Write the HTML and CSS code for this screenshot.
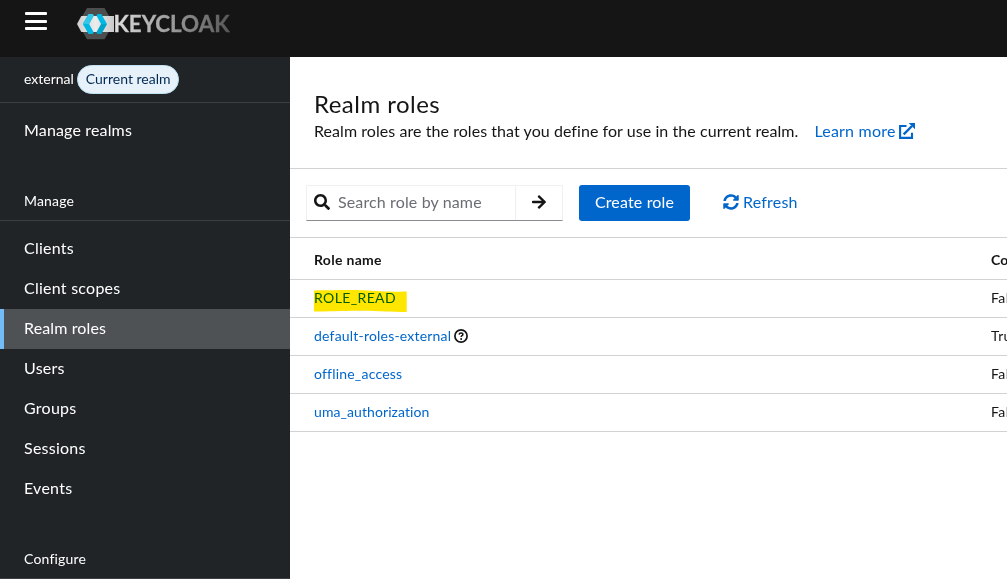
FILE: index.html
```
<!DOCTYPE html>
<html lang="en">
<head>
<meta charset="utf-8">
<title>Keycloak Administration Console</title>
<link rel="stylesheet" href="styles.css">
</head>
<body>
<div class="page">
  <header class="masthead">
    <button class="menu-toggle" aria-label="Menu"><span></span><span></span><span></span></button>
    <svg class="logo" width="156" height="34" viewBox="76 7 156 34">
      <defs>
        <linearGradient id="band" x1="0" x2="1" y1="0" y2="0"><stop offset="0" stop-color="#cfcfcf"/><stop offset=".5" stop-color="#ececec"/><stop offset="1" stop-color="#c9c9c9"/></linearGradient>
        <linearGradient id="word" gradientUnits="userSpaceOnUse" x1="114" x2="229" y1="0" y2="0"><stop offset="0" stop-color="#dedede"/><stop offset="1" stop-color="#585858"/></linearGradient>
      </defs>
      <path fill="#4d4d4d" d="M87 8h17.5l9 15.7-9 15.6H87l-9-15.6z"/>
      <path fill="url(#band)" d="M81.3 16H114v16H81.3L77 24z"/>
      <path fill="#00b8e3" d="M88.5 14h4.2l1 1.8L89.1 24l4.6 8.2-1 1.8h-4.2L82.8 24z"/>
      <path fill="#33c6e9" d="M88.5 14h4.2l1 1.8L89.1 24h-6.3z"/>
      <path fill="#00b8e3" d="M97.5 14h3.8l5.700 10-5.700 10h-3.800l-1-1.800 4.600-8.200-4.600-8.200z"/>
      <path fill="#008aaa" d="M101.100 24h5.900l-5.700 10h-3.800l-1-1.800z" opacity=".45"/>
      <text x="113.500" y="31.500" textLength="116" lengthAdjust="spacingAndGlyphs" class="wordmark">KEYCLOAK</text>
    </svg>
  </header>
  <div class="body">
    <nav class="sidebar">
      <div class="realm"><span class="realm-name">external</span><span class="pill">Current realm</span></div>
      <a class="item manage-realms">Manage realms</a>
      <h2 class="section">Manage</h2>
      <div class="items">
        <a class="item">Clients</a>
        <a class="item">Client scopes</a>
        <a class="item current">Realm roles</a>
        <a class="item">Users</a>
        <a class="item">Groups</a>
        <a class="item">Sessions</a>
        <a class="item">Events</a>
      </div>
      <h2 class="section">Configure</h2>
    </nav>
    <main class="main">
      <section class="intro">
        <h1>Realm roles</h1>
        <p><span class="desc">Realm roles are the roles that you define for use in the current realm.</span><a class="learn">Learn more<svg width="16" height="16" viewBox="0 0 16 16"><path d="M7.500 3H1.100v11.900H13V9.800" fill="none" stroke="currentColor" stroke-width="2.100"/><path d="M4.700 11.300L13 3" fill="none" stroke="currentColor" stroke-width="2.400"/><path d="M9.700 0H16v6.300z" fill="currentColor"/></svg></a></p>
      </section>
      <section class="toolbar">
        <div class="search">
          <div class="field"><svg width="16" height="16" viewBox="0 0 512 512"><path fill="currentColor" d="M505 442.700L405.300 343c-4.500-4.500-10.600-7-17-7H372c27.600-35.300 44-79.700 44-128C416 93.100 322.900 0 208 0S0 93.100 0 208s93.100 208 208 208c48.300 0 92.700-16.400 128-44v16.300c0 6.400 2.500 12.500 7 17l99.700 99.700c9.400 9.400 24.600 9.400 33.900 0l28.300-28.300c9.400-9.400 9.400-24.600.1-34zM208 336c-70.700 0-128-57.200-128-128 0-70.700 57.200-128 128-128 70.700 0 128 57.200 128 128 0 70.700-57.200 128-128 128z"/></svg><span>Search role by name</span></div>
          <button class="go" aria-label="Search"><svg width="14" height="16" viewBox="0 0 448 512"><path fill="currentColor" d="M190.500 66.900l22.200-22.200c9.400-9.400 24.600-9.400 33.900 0L441 239c9.400 9.400 9.400 24.600 0 33.900L246.600 467.300c-9.400 9.400-24.600 9.400-33.900 0l-22.200-22.200c-9.500-9.500-9.300-25 .4-34.300L311.400 296H24c-13.300 0-24-10.700-24-24v-32c0-13.300 10.700-24 24-24h287.400L190.900 101.200c-9.800-9.300-10-24.800-.4-34.300z"/></svg></button>
        </div>
        <button class="create">Create role</button>
        <a class="refresh"><svg width="16" height="16" viewBox="0 0 512 512"><path fill="currentColor" d="M370.720 133.280C339.458 104.008 298.888 87.962 255.848 88c-77.458.068-144.328 53.178-162.791 126.850-1.344 5.363-6.122 9.150-11.651 9.150H24.103c-7.498 0-13.194-6.807-11.807-14.176C33.933 94.924 134.813 8 256 8c66.448 0 126.791 26.136 171.315 68.685L463.030 40.970C478.149 25.851 504 36.559 504 57.941V192c0 13.255-10.745 24-24 24H345.941c-21.382 0-32.090-25.851-16.971-40.971l41.750-41.749zM32 296h134.059c21.382 0 32.090 25.851 16.971 40.971l-41.750 41.750c31.262 29.273 71.835 45.319 114.876 45.280 77.418-.070 144.315-53.144 162.787-126.849 1.344-5.363 6.122-9.150 11.651-9.150h57.304c7.498 0 13.194 6.807 11.807 14.176C478.067 417.076 377.187 504 256 504c-66.448 0-126.791-26.136-171.315-68.685L48.970 471.030C33.851 486.149 8 475.441 8 454.059V320c0-13.255 10.745-24 24-24z"/></svg>Refresh</a>
      </section>
      <section class="table">
        <div class="row head"><span class="role-head">Role name</span><span>Composite</span></div>
        <div class="row"><a class="marked"><span class="caps">ROLE_READ</span><svg class="marker" width="93" height="24" viewBox="0 0 93 24"><path fill="#ffe600" d="M0 1.500C20 1 38 .6 50 1.200S75 3 92.700 2.600V23C75 23 65 21.500 45 21.700S15 22.300 0 22.600z"/></svg></a><span class="value">False</span></div>
        <div class="row"><a>default-roles-external<svg class="help" width="14" height="14" viewBox="0 0 14 14"><circle cx="7" cy="7" r="6.100" fill="none" stroke="#151515" stroke-width="1.700"/><path d="M5.100 5.600c.1-1.100.8-1.700 1.900-1.700s1.900.6 1.900 1.500c0 1.300-1.800 1.300-1.800 2.600" fill="none" stroke="#151515" stroke-width="1.500"/><circle cx="7.100" cy="9.900" r="1" fill="#151515"/></svg></a><span class="value">True</span></div>
        <div class="row"><a>offline_access</a><span class="value">False</span></div>
        <div class="row"><a class="uma">uma_authorization</a><span class="value">False</span></div>
      </section>
    </main>
  </div>
</div>
</body>
</html>
```
FILE: styles.css
```
* { box-sizing: border-box; }
body { margin: 0; background: #fff; color: #151515; font: 16px/24px Lato, "Open Sans", sans-serif; letter-spacing: .15px; }
button { font: inherit; letter-spacing: inherit; border: 0; padding: 0; background: none; color: inherit; }
svg { flex: none; }
.page { width: 1007px; height: 579px; overflow: hidden; display: flex; flex-direction: column; }

.masthead { height: 57px; flex: none; background: #151515; display: flex; align-items: flex-start; padding: 7px 0 0 25px; }
.menu-toggle { width: 22px; margin: 5px 29px 0 0; display: flex; flex-direction: column; gap: 4.5px; }
.menu-toggle span { height: 3px; background: #fff; border-radius: 1px; }
.wordmark { font: 700 22px Lato, sans-serif; letter-spacing: 0; fill: url(#word); stroke: url(#word); stroke-width: .3px; }

.body { flex: 1; min-height: 0; display: flex; }
.sidebar { width: 290px; flex: none; background: #212427; color: #fff; }
.realm { height: 46px; border-bottom: 1px solid #3c3f42; padding-left: 24px; display: flex; align-items: center; gap: 3px; font-size: 14px; letter-spacing: 0; }
.realm-name { padding-bottom: 2px; }
.pill { height: 29px; padding: 0 8px; line-height: 25px; border: 1px solid #bee1f4; border-radius: 15px; background: #e7f1fa; color: #002952; }
.item { display: block; height: 40px; line-height: 38px; padding-left: 24px; letter-spacing: .25px; }
.manage-realms { margin-top: 8px; letter-spacing: .16px; }
.section { margin: 0; height: 39px; padding-left: 24px; border-bottom: 1px solid #3c3f42; font-size: 14px; font-weight: 400; line-height: 38px; letter-spacing: .18px; }
.manage-realms + .section { margin-top: 31px; }
.items { padding: 8px 0 31px; }
.current { background: #4f5255; border-left: 4px solid #73bcf7; padding-left: 20px; letter-spacing: .13px; }

.main { flex: 1; min-width: 0; }
.intro { height: 112px; padding: 31px 24px 0; border-bottom: 1px solid #d2d2d2; }
h1 { margin: 0; font-size: 24px; line-height: 31px; font-weight: 400; letter-spacing: .47px; }
.intro p { margin: 0; display: flex; gap: 16px; white-space: nowrap; }
.desc { letter-spacing: .06px; }
.learn, .refresh { color: #06c; display: flex; align-items: center; }
.learn { gap: 3px; letter-spacing: .22px; }
.toolbar { height: 69px; padding: 0 16px; display: flex; align-items: center; border-bottom: 1px solid #d2d2d2; }
.search { width: 257px; height: 36px; display: flex; border: 1px solid #f0f0f0; border-bottom-color: #8a8d90; }
.field { width: 208px; display: flex; align-items: center; gap: 8px; padding: 0 0 2px 7px; }
.field span { color: #6a6e73; letter-spacing: .13px; }
.go { flex: 1; border-left: 1px solid #f0f0f0; display: flex; align-items: center; justify-content: center; padding: 0 1px 2px 0; }
.create { width: 111px; height: 36px; margin: 0 33px 0 16px; padding-bottom: 2px; border-radius: 3px; background: #06c; color: #fff; letter-spacing: .15px; }
.refresh { gap: 4px; padding-bottom: 2px; letter-spacing: .2px; }

.row { height: 38px; display: grid; grid-template-columns: 677px 200px; align-items: center; padding: 0 0 2px 24px; border-bottom: 1px solid #d2d2d2; font-size: 14px; letter-spacing: .2px; }
.row a { color: #06c; display: flex; align-items: center; gap: 3px; }
.head { height: 42px; padding-top: 3px; padding-bottom: 0; font-weight: 700; }
.role-head { letter-spacing: .3px; }
.value { letter-spacing: .4px; }
.row .marked { position: relative; }
.caps { letter-spacing: .38px; }
.marker { position: absolute; left: 0; top: 3px; mix-blend-mode: multiply; }
.uma { letter-spacing: .08px; }
```
